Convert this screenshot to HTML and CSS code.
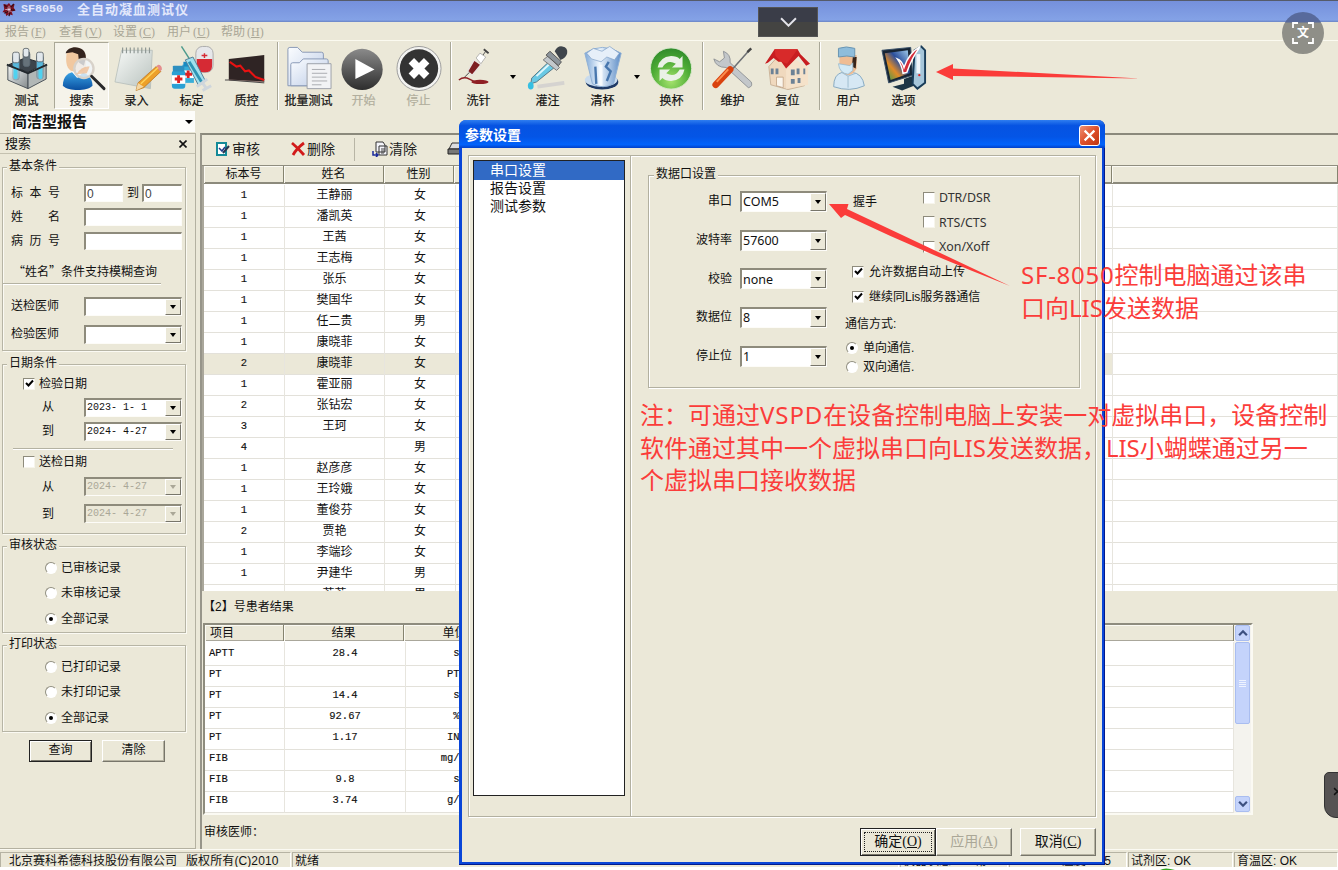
FILE: index.html
```html
<!DOCTYPE html>
<html lang="zh-CN">
<head>
<meta charset="utf-8">
<title>SF8050 全自动凝血测试仪</title>
<link rel="stylesheet" href="styles.css">
</head>
<body>
<svg width="0" height="0" class="defs">
  <defs>
    <linearGradient id="steel" x1="0" y1="0" x2="1" y2="1"><stop offset="0" stop-color="#f2f5f8"/><stop offset=".5" stop-color="#a9b2ba"/><stop offset="1" stop-color="#5a636b"/></linearGradient>
    <linearGradient id="blue" x1="0" y1="0" x2="0" y2="1"><stop offset="0" stop-color="#3aa6e8"/><stop offset="1" stop-color="#0a4fa0"/></linearGradient>
    <linearGradient id="ice" x1="0" y1="0" x2="1" y2="0"><stop offset="0" stop-color="#7ea8d8"/><stop offset=".4" stop-color="#eef6fd"/><stop offset="1" stop-color="#5c8cc6"/></linearGradient>
    <linearGradient id="dark" x1="0" y1="0" x2="0" y2="1"><stop offset="0" stop-color="#8a8a8a"/><stop offset="1" stop-color="#2d2d2d"/></linearGradient>
    <linearGradient id="paper" x1="0" y1="0" x2="1" y2="1"><stop offset="0" stop-color="#f7f9f7"/><stop offset="1" stop-color="#b8c2be"/></linearGradient>
    <linearGradient id="folder" x1="0" y1="0" x2="1" y2="1"><stop offset="0" stop-color="#fbfdff"/><stop offset="1" stop-color="#bccbe6"/></linearGradient>
    <linearGradient id="screen" x1="0" y1="1" x2="1" y2="0"><stop offset="0" stop-color="#2a9a50"/><stop offset=".35" stop-color="#e08a28"/><stop offset=".6" stop-color="#2b4f9c"/><stop offset="1" stop-color="#a8d4ef"/></linearGradient>
    <radialGradient id="green" cx=".5" cy=".8" r=".8"><stop offset="0" stop-color="#a5e36c"/><stop offset=".6" stop-color="#4cab35"/><stop offset="1" stop-color="#2f8a2b"/></radialGradient>
  </defs>
</svg>
<div class="app">
  <header class="titlebar">
    <svg class="logo" viewBox="0 0 16 16"><path d="M2 2l4 1 2-2 2 3 4-2-1 4 2 3-4 1 1 4-4-1-3 2-1-4-3 0 2-3z" fill="#7c1020"/><path d="M4 8l8 0M8 4v8M5 5l6 6M11 5l-6 6" stroke="#e6dcf4" stroke-width=".7"/><path d="M3 3l3 3M13 2l-3 4M14 9l-4-1M3 12l4-2M8 15l1-4" stroke="#3c0810" stroke-width="1.400"/></svg>
    <span class="lat">SF8050</span><span>全自动凝血测试仪</span>
  </header>
  <nav class="menubar"><span>报告<em>(<u>F</u>)</em></span><span>查看<em>(<u>V</u>)</em></span><span>设置<em>(<u>C</u>)</em></span><span>用户<em>(<u>U</u>)</em></span><span>帮助<em>(<u>H</u>)</em></span></nav>
  <div class="toolbar">
    <div class="tool"><svg viewBox="0 0 48 48"><path d="M5 20L22 13l20 6-17 9z" fill="#3c444b" stroke="#20262b"/><g stroke="#5c6a74" stroke-width=".8"><rect x="9" y="10" width="7" height="26" rx="3" fill="#58b8dc"/><rect x="20" y="6" width="7" height="16" rx="3" fill="#66727a"/><rect x="34" y="10" width="7" height="25" rx="3" fill="#58b8dc"/></g><g fill="#e2e8ec" stroke="#4d565d" stroke-width=".8"><rect x="9" y="7" width="7" height="11" rx="2"/><rect x="20" y="3" width="6" height="9" rx="2"/><rect x="34" y="7" width="7" height="10" rx="2"/></g><path d="M4 21v15l21 9V29z" fill="url(#steel)" fill-opacity=".72" stroke="#4a5258"/><path d="M25 29v16l19-10V20z" fill="#9aa3a9" fill-opacity=".72" stroke="#4a5258"/><path d="M12 24v9M38 24v9" stroke="#4fd2f0" stroke-width="4" stroke-linecap="round"/><path d="M3 20l22 9 20-9" fill="none" stroke="#22282d" stroke-width="2"/></svg><span>测试</span></div>
    <div class="tool selected"><svg viewBox="0 0 48 48"><path d="M8 8c3-8 19-8 20 4v12l-7 6-9-4C7 22 7 15 8 8z" fill="#f1c8a0"/><path d="M7 8C9-1 29-1 28 13l-2 8-5-3-1-9-6-2z" fill="#33231d"/><path d="M4 42c0-10 6-15 15-15s16 6 16 15c-6 6-25 6-31 0z" fill="url(#blue)"/><path d="M13 27l6 7 7-7" fill="#fff"/><circle cx="26" cy="24" r="10" fill="#f0f4f8" fill-opacity=".8" stroke="#d8d2ca" stroke-width="2.500"/><path d="M18 30q6-9 14-8l-3 7z" fill="#efb483" opacity=".65"/><path d="M34 32l13 13" stroke="#29292b" stroke-width="3" stroke-linecap="round"/></svg><span>搜索</span></div>
    <div class="tool"><svg viewBox="0 0 48 48"><path d="M8 5h32l-2 40L1 38z" fill="url(#paper)" stroke="#b4bcb8" stroke-width=".8"/><path d="M9 2v6m4-6v6m4-6v6m4-6v6m4-6v6m4-6v6m4-6v6m4-6v6" stroke="#8d9693" stroke-width="1.200"/><path d="M23 47l2-8 19-17 5 5-18 17z" fill="#eda02a" stroke="#b46c18" stroke-width=".7"/><path d="M44 22l2-2q4 0 4 5l-2 2z" fill="#e58d8d"/><path d="M23 47l2-8 6 4z" fill="#f3d7a5"/><path d="M28 40l18-17" stroke="#ffd45c" stroke-width="1.500"/></svg><span>录入</span></div>
    <div class="tool"><svg viewBox="0 0 48 48"><rect x="28" y="1" width="18" height="27" rx="7" fill="#e6e7ea" stroke="#aaa"/><path d="M29 14h16v7q0 7-8 7t-8-7z" fill="#d62a34"/><path d="M37 8v5m-3-2.500h6" stroke="#d62a34" stroke-width="1.500"/><path d="M14 20h12v19H14z" fill="#38aed8"/><rect x="15" y="17" width="10" height="5" fill="#188bc3"/><path d="M14 26h12v8H14z" fill="#fff"/><path d="M20 26v8m-4-4h8" stroke="#e02222" stroke-width="3"/><rect x="3" y="26" width="14" height="19" rx="3" fill="#2aa0d4"/><rect x="4" y="21" width="12" height="6" rx="1" fill="#2d8fc0"/><path d="M3 31h14v9H3z" fill="#fff"/><path d="M10 31v8m-4-4h8" stroke="#e02222" stroke-width="3"/><path d="M13 1l9 14" stroke="#4c9a8c" stroke-width="1.500"/><path d="M17 15l8-3 13 25-7 5z" fill="#9fe0ee" stroke="#547c94"/><path d="M21 17l13 21" stroke="#2c94b4" stroke-width="3"/><path d="M29 43l11-8m-5 4l4 6m-4 2l9-5" stroke="#cfd6dc" stroke-width="3"/></svg><span>标定</span></div>
    <div class="tool"><svg viewBox="0 0 48 48"><path d="M5 14l37-4v28L5 36z" fill="#2f2424"/><path d="M5 36l37 2" stroke="#9e7f7a"/><path d="M1 36h4l37 3" stroke="#444" fill="none"/><path d="M6 17l7 5 4-1 5 6 4-1 7 7 9 3" fill="none" stroke="#e81212" stroke-width="2.200"/></svg><span>质控</span></div>
    <i class="sep s1"></i>
    <div class="tool"><svg viewBox="0 0 48 48"><g stroke="#8797b5" fill="url(#folder)" stroke-linejoin="round"><path d="M2 42V4q0-2 2-2h8l5 5h20q2 0 2 2v33z"/><path d="M5 42V20q0-2 2-2h7l4-4h24q2 0 2 2v26z"/><path d="M22 19h25v26H22z" fill="#f2f3f5" stroke="#9b9fa7"/></g><path d="M27 25h14M27 29h16M27 33h15M27 37h16M27 41h10" stroke="#a8abb0"/></svg><span>批量测试</span></div>
    <div class="tool off"><svg viewBox="0 0 48 48"><circle cx="22" cy="25" r="21.500" fill="url(#dark)"/><path d="M15 14v21l20-10z" fill="#fff"/></svg><span>开始</span></div>
    <div class="tool off"><svg viewBox="0 0 48 48"><circle cx="24" cy="24" r="23" fill="#f3f3f1" stroke="#9a9a9a"/><circle cx="24" cy="24" r="20" fill="#333"/><path d="M16 16l16 16M32 16L16 32" stroke="#fff" stroke-width="8"/></svg><span>停止</span></div>
    <i class="sep s2"></i>
    <div class="tool wash"><svg viewBox="0 0 48 48"><path d="M31 6l-5 7" stroke="#555"/><path d="M29 4l5 4" stroke="#444" stroke-width="2"/><path d="M19 15l7 5-9 11-5-4z" fill="#7e1f22" stroke="#e8e4e0" stroke-width="1.500"/><path d="M21 13l4-5 6 4-5 7z" fill="#fff" stroke="#999" stroke-width=".7"/><path d="M14 28l-6 6" stroke="#444"/><path d="M3 36q5-4 11-1l6 3" fill="none" stroke="#8f1f24" stroke-width="1.500"/><ellipse cx="25" cy="38" rx="9" ry="2.200" fill="#8f1f24"/></svg><span>洗针</span></div>
    <b class="drop"></b>
    <div class="tool"><svg viewBox="0 0 48 48"><path d="M13 43l28-4" stroke="#d5d3d0" stroke-width="4"/><path d="M7 34L27 15l6 6-21 17-6 2z" fill="#69c9e4" stroke="#567786"/><path d="M12 32l15-14" stroke="#dff6fb" stroke-width="2"/><path d="M24 11l12 12-3 3-14-11z" fill="#c3c8cc" stroke="#777"/><path d="M26 6l12 11-3 4-13-11z" fill="#8c949b" stroke="#555"/><path d="M31 6q3-6 8-5 6 1 5 7-1 5-7 7z" fill="#3f454c"/><ellipse cx="6" cy="42" rx="3" ry="4" fill="#36bfe2"/></svg><span>灌注</span></div>
    <div class="tool"><svg viewBox="0 0 48 48"><ellipse cx="23" cy="38" rx="17" ry="8" fill="#1f3a66"/><ellipse cx="22" cy="36" rx="17" ry="7" fill="#c8dbee"/><path d="M5 8q18-12 38 0l-8 32q-11 6-22 0z" fill="url(#ice)" stroke="#8fb0d4"/><path d="M7 8l7-5 9 3 8-5 10 7-5 7-8-3-6 5-10-3z" fill="#e6eff9" stroke="#7c9dc4" stroke-width=".7"/><path d="M16 22l1 18M30 17l-3 5 5 5-4 10" stroke="#4877ae" fill="none" stroke-width="2.500"/><path d="M22 20v22" stroke="#fff" stroke-width="3" opacity=".7"/></svg><span>清杯</span></div>
    <b class="drop"></b>
    <div class="tool"><svg viewBox="0 0 48 48"><circle cx="23" cy="24" r="21.500" fill="url(#green)" stroke="#d8e7cc"/><path d="M9 23q2-11 14-12 6 0 9 3l3-3v12H24l4-4q-9-5-14 4zM37 25q-2 11-14 12-6 0-9-3l-3 3V25h11l-4 4q9 5 14-4z" fill="#eaf1e6"/></svg><span>换杯</span></div>
    <i class="sep s3"></i>
    <div class="tool"><svg viewBox="0 0 48 48"><path d="M4 14l6 3 5-4-1-7q8 3 7 12l22 20q2 5-3 6L17 23q-11 0-13-9z" fill="#c3c7ca" stroke="#81868a" stroke-width=".8"/><path d="M41 5L24 24" stroke="#6c6f73" stroke-width="1.600"/><path d="M39 7l4-4" stroke="#444" stroke-width="2.500"/><path d="M6 41L21 25" stroke="#d9420f" stroke-width="7" stroke-linecap="round"/><path d="M7 38l12-13" stroke="#fb8f4f" stroke-width="2"/></svg><span>维护</span></div>
    <div class="tool"><svg viewBox="0 0 48 48"><path d="M4 22l9-10 28 10v20l-17 4-18-5z" fill="#f0d9be" stroke="#c2a88c" stroke-width=".8"/><path d="M22 45V25l9-11 14 9v18z" fill="#f5e2ca"/><path d="M0 19L10 4h24l3 5 10 10-4 2-8-10-13 13-5-7-3 0-5-4-6 5z" fill="#c81d20"/><path d="M10 4h24l-11 15-6-2-6-6z" fill="#d82a2a"/><g fill="#6c8296"><path d="M6 24h3v6H6zM11 24h3v6h-3zM27 25h4v6h-4zM33 24h3v6h-3zM40 24h2v6h-2zM27 35h4v5h-4zM34 34h3v5h-3z"/></g><path d="M12 33h7v11l-7-2z" fill="#faf5ec" stroke="#bd9e80" stroke-width=".8"/></svg><span>复位</span></div>
    <i class="sep s4"></i>
    <div class="tool"><svg viewBox="0 0 48 48"><path d="M8 43q0-13 9-15h10q11 1 13 14-15 7-32 1z" fill="#d6e8f4" stroke="#86a8bf"/><path d="M14 10h18v14q-4 7-9 7t-9-8z" fill="#efbd94"/><path d="M28 12h4l-1 12-4-2z" fill="#37241a"/><path d="M13 3q8-3 17 0v9q-8-2-17 0z" fill="#8fbddb" stroke="#6793b1"/><path d="M13 19l12 2 3-3v8l-5 4q-9-1-10-11z" fill="#d2eaf7" stroke="#97b9cd" stroke-width=".8"/><path d="M23 44V32l-7-4m7 4l8-3" fill="none" stroke="#9dbccf"/></svg><span>用户</span></div>
    <div class="tool"><svg viewBox="0 0 48 48"><path d="M24 35l11-4 2 10-15 6-10-4 12-3z" fill="#1d3545"/><path d="M1 5l30-3 2 29-25 8z" fill="#172534" stroke="#3a5068"/><path d="M4 8l24-3 2 24-20 7z" fill="url(#screen)"/><path d="M35 5l7-4 4 4v34l-8 6-5-5z" fill="#a6c6da" stroke="#193c58" stroke-width="2"/><path d="M39 9v20" stroke="#f1f6fa" stroke-width="4"/><circle cx="40" cy="31" r="1.200" fill="#e02020"/><path d="M17 14q5 2 7 9Q29 8 41 1q-9 12-14 27l-4 1q-1-8-6-15z" fill="#d42d3b" stroke="#fff" stroke-width="1.500"/></svg><span>选项</span></div>
  </div>
  <div class="report-row"><div class="report-select">简洁型报告<b class="tri"></b></div></div>
  <main class="main">
    <aside class="side">
      <div class="side-head"><span>搜索</span><svg viewBox="0 0 8 8"><path d="M.5.5l7 7M7.500.5l-7 7" stroke="#111" stroke-width="1.600"/></svg></div>
      <section class="group basic"><h3>基本条件</h3>
        <div class="row r24"><label class="spread"><i>标</i><i>本</i><i>号</i></label><div class="inp w38">0</div><em>到</em><div class="inp w38">0</div></div>
        <div class="row r24"><label class="spread"><i>姓</i><i>名</i></label><div class="inp"></div></div>
        <div class="row r24"><label class="spread"><i>病</i><i>历</i><i>号</i></label><div class="inp"></div></div>
        <div class="row hint">“姓名”条件支持模糊查询</div>
        <hr class="line1">
        <div class="row r28"><label>送检医师</label><div class="inp combo"><b></b></div></div>
        <div class="row r28"><label>检验医师</label><div class="inp combo"><b></b></div></div>
      </section>
      <section class="group dates"><h3>日期条件</h3>
        <div class="row chk"><span class="box"><svg viewBox="0 0 9 9"><path d="M1 4l2.500 2.500L8 1.500" fill="none" stroke="#000" stroke-width="2"/></svg></span>检验日期</div>
        <div class="row r24 d"><label>从</label><div class="inp combo mono">2023- 1- 1<b></b></div></div>
        <div class="row r24 d"><label>到</label><div class="inp combo mono">2024- 4-27<b></b></div></div>
        <hr class="line2">
        <div class="row chk"><span class="box"></span>送检日期</div>
        <div class="row r27 d"><label>从</label><div class="inp combo mono dis">2024- 4-27<b></b></div></div>
        <div class="row r27 d"><label>到</label><div class="inp combo mono dis">2024- 4-27<b></b></div></div>
      </section>
      <section class="group radios"><h3>审核状态</h3>
        <div class="row"><span class="radio"></span>已审核记录</div>
        <div class="row"><span class="radio"></span>未审核记录</div>
        <div class="row"><span class="radio on"></span>全部记录</div>
      </section>
      <section class="group radios"><h3>打印状态</h3>
        <div class="row"><span class="radio"></span>已打印记录</div>
        <div class="row"><span class="radio"></span>未打印记录</div>
        <div class="row"><span class="radio on"></span>全部记录</div>
      </section>
      <div class="side-btns"><div class="btn def">查询</div><div class="btn">清除</div></div>
    </aside>
    <section class="content">
      <div class="sub-tools">
        <span><svg viewBox="0 0 16 16"><path d="M2 2h9v12H2z" fill="#fff" stroke="#148a98" stroke-width="2"/><path d="M4 7l3 3 3-4" fill="none" stroke="#223a8a" stroke-width="1.500"/><path d="M8 12l6-7" stroke="#2a3550" stroke-width="2"/></svg>审核</span>
        <span><svg viewBox="0 0 16 16"><path d="M2 2q6 5 12 12M14 2Q7 7 3 14" fill="none" stroke="#d21a1a" stroke-width="2.800"/></svg>删除</span>
        <i></i>
        <span><svg viewBox="0 0 16 16"><path d="M4 1h7l2 3v7H4zM7 5h8v9H7z" fill="#f4f4fa" stroke="#333"/><path d="M9 8h4M9 10h4M9 12h3" stroke="#444"/><path d="M1 10v4h5m-2-2l2 2-2 2" fill="none" stroke="#1a2a9a" stroke-width="1.500"/></svg>清除</span>
        <span class="printer"><svg viewBox="0 0 16 16"><path d="M5 2h9l-2 6H2z" fill="#ddd" stroke="#333"/><path d="M1 8h14v5H1z" fill="#777" stroke="#222"/></svg></span>
      </div>
      <div class="grid1">
        <div class="thead"><span>标本号</span><span>姓名</span><span>性别</span><span></span><span></span></div>
        <div class="tr"><span>1</span><span>王静丽</span><span>女</span><span></span><span></span></div>
        <div class="tr"><span>1</span><span>潘凯英</span><span>女</span><span></span><span></span></div>
        <div class="tr"><span>1</span><span>王茜</span><span>女</span><span></span><span></span></div>
        <div class="tr"><span>1</span><span>王志梅</span><span>女</span><span></span><span></span></div>
        <div class="tr"><span>1</span><span>张乐</span><span>女</span><span></span><span></span></div>
        <div class="tr"><span>1</span><span>樊国华</span><span>女</span><span></span><span></span></div>
        <div class="tr"><span>1</span><span>任二贵</span><span>男</span><span></span><span></span></div>
        <div class="tr"><span>1</span><span>康晓菲</span><span>女</span><span></span><span></span></div>
        <div class="tr cur"><span>2</span><span>康晓菲</span><span>女</span><span></span><span></span></div>
        <div class="tr"><span>1</span><span>霍亚丽</span><span>女</span><span></span><span></span></div>
        <div class="tr"><span>2</span><span>张钻宏</span><span>女</span><span></span><span></span></div>
        <div class="tr"><span>3</span><span>王珂</span><span>女</span><span></span><span></span></div>
        <div class="tr"><span>4</span><span></span><span>男</span><span></span><span></span></div>
        <div class="tr"><span>1</span><span>赵彦彦</span><span>女</span><span></span><span></span></div>
        <div class="tr"><span>1</span><span>王玲娥</span><span>女</span><span></span><span></span></div>
        <div class="tr"><span>1</span><span>董俊芬</span><span>女</span><span></span><span></span></div>
        <div class="tr"><span>2</span><span>贾艳</span><span>女</span><span></span><span></span></div>
        <div class="tr"><span>1</span><span>李端珍</span><span>女</span><span></span><span></span></div>
        <div class="tr"><span>1</span><span>尹建华</span><span>男</span><span></span><span></span></div>
        <div class="tr"><span></span><span>若若</span><span>男</span><span></span><span></span></div>
      </div>
      <div class="caption">【2】号患者结果</div>
      <div class="grid2">
        <div class="grid2-body">
          <div class="thead"><span>项目</span><span>结果</span><span>单位</span><span></span></div>
          <div class="tr"><span>APTT</span><span>28.4</span><span>s</span><span></span></div>
          <div class="tr"><span>PT</span><span></span><span>PTR</span><span></span></div>
          <div class="tr"><span>PT</span><span>14.4</span><span>s</span><span></span></div>
          <div class="tr"><span>PT</span><span>92.67</span><span>%</span><span></span></div>
          <div class="tr"><span>PT</span><span>1.17</span><span>INR</span><span></span></div>
          <div class="tr"><span>FIB</span><span></span><span>mg/dl</span><span></span></div>
          <div class="tr"><span>FIB</span><span>9.8</span><span>s</span><span></span></div>
          <div class="tr"><span>FIB</span><span>3.74</span><span>g/l</span><span></span></div>
        </div>
        <div class="scroll">
          <div class="sb"><svg viewBox="0 0 9 9"><path d="M1 6.500l3.500-3.500L8 6.500" fill="none" stroke="#3c5080" stroke-width="2"/></svg></div>
          <div class="thumb"><i></i><i></i><i></i><i></i></div>
          <div class="sb end"><svg viewBox="0 0 9 9"><path d="M1 2.500L4.500 6 8 2.500" fill="none" stroke="#3c5080" stroke-width="2"/></svg></div>
        </div>
      </div>
      <div class="doctor">审核医师：</div>
    </section>
  </main>
  <footer class="status"><span>北京赛科希德科技股份有限公司<em>版权所有(C)2010</em></span><span>就绪</span><span>仪器状态：正常</span><span class="tail">温度：25</span><span>试剂区: OK</span><span>育温区: OK</span></footer>

  <div class="dialog">
    <div class="dlg-title"><span>参数设置</span><div class="close"><svg viewBox="0 0 12 12"><path d="M1.500 1.500l9 9M10.500 1.500l-9 9" stroke="#fff" stroke-width="2"/></svg></div></div>
    <div class="dlg-body">
      <div class="frame">
        <ul class="list"><li class="sel">串口设置</li><li>报告设置</li><li>测试参数</li></ul>
        <div class="pane">
          <section class="port"><h3>数据口设置</h3>
            <div class="port-left">
              <div class="prow"><label>串口</label><div class="inp combo">COM5<b></b></div></div>
              <div class="prow"><label>波特率</label><div class="inp combo">57600<b></b></div></div>
              <div class="prow"><label>校验</label><div class="inp combo">none<b></b></div></div>
              <div class="prow"><label>数据位</label><div class="inp combo">8<b></b></div></div>
              <div class="prow"><label>停止位</label><div class="inp combo">1<b></b></div></div>
            </div>
            <div class="port-right">
              <div class="shake"><span>握手</span><div>
                <p><span class="box"></span>DTR/DSR</p><p><span class="box"></span>RTS/CTS</p><p><span class="box"></span>Xon/Xoff</p></div></div>
              <p class="opt"><span class="box"><svg viewBox="0 0 9 9"><path d="M1 4l2.500 2.500L8 1.500" fill="none" stroke="#000" stroke-width="2"/></svg></span>允许数据自动上传</p>
              <p class="opt"><span class="box"><svg viewBox="0 0 9 9"><path d="M1 4l2.500 2.500L8 1.500" fill="none" stroke="#000" stroke-width="2"/></svg></span>继续同Lis服务器通信</p>
              <p class="mode">通信方式:</p>
              <p class="rad"><span class="radio on"></span>单向通信.</p>
              <p class="rad"><span class="radio"></span>双向通信.</p>
            </div>
          </section>
        </div>
      </div>
      <div class="dlg-btns"><div class="btn def focus"><span>确定(<u>O</u>)</span></div><div class="btn dis">应用(<u>A</u>)</div><div class="btn cancel">取消(<u>C</u>)</div></div>
    </div>
  </div>

  <svg class="arrows" viewBox="0 0 1338 870"><path d="M936 72l17-8v4.500l187 10-187-2.500v4z" fill="#fb3c3a"/><path d="M829 204l19.500 0-1.500 5q85 40 163 77-85-33-165-71l-4 3z" fill="#fb3c3a"/><path d="M1160 870q5-3 15 0z" fill="#35a820"/></svg>
  <p class="note n1"><span>SF-8050</span>控制电脑通过该串<br>口向LIS发送数据</p>
  <p class="note n2">注：可通过<span>VSPD</span>在设备控制电脑上安装一对虚拟串口，设备控制<br>软件通过其中一个虚拟串口向LIS发送数据，LIS小蝴蝶通过另一<br>个虚拟串口接收数据</p>
  <div class="pull"><svg viewBox="0 0 16 9"><path d="M1 1l7 7 7-7" fill="none" stroke="#e4e4ea" stroke-width="1.800"/></svg></div>
  <div class="translate"><svg viewBox="0 0 22 22"><path d="M1 6V1h5M16 1h5v5M21 16v5h-5M6 21H1v-5" fill="none" stroke="#fff" stroke-width="1.800"/></svg><span>文</span></div>
  <div class="edge-tab"><svg viewBox="0 0 8 8"><path d="M1 1l3 3-3 3M7 1L4 4l3 3" fill="none" stroke="#111" stroke-width="1.300"/></svg></div>
</div>
</body>
</html>
```
FILE: styles.css
```css
* { box-sizing: border-box; }
body { margin: 0; background: #ebe8d8; }
p, h3, ul { margin: 0; padding: 0; font-weight: normal; list-style: none; }
i, em { font-style: normal; }
.defs { position: absolute; }
.app { position: relative; width: 1338px; height: 870px; overflow: hidden; display: flex; flex-direction: column; background: #ebe8d8; color: #111; font: 12px/16px "Liberation Sans", "Noto Sans CJK SC", sans-serif; white-space: nowrap; }

.titlebar { height: 22px; flex: none; border-top: 1px solid #555b6a; background: linear-gradient(#7590dc, #7e9be2 55%, #84a2e6 90%, #6a84c4); display: flex; align-items: center; padding: 0 0 5px 1px; color: #e3e8fb; font: 600 13px/16px "Noto Sans CJK SC", sans-serif; letter-spacing: 1px; }
.titlebar .logo { width: 16px; height: 15px; margin-right: 4px; }
.titlebar .lat { width: 56px; font: bold 11.700px/16px "Liberation Mono", monospace; letter-spacing: 0; }
.menubar { height: 19px; flex: none; display: flex; gap: 12px; padding: 2px 0 0 5px; color: #a9a696; border-bottom: 1px solid #fbfaf0; font-family: "Liberation Serif", "Noto Sans CJK SC", serif; }
.menubar span { width: 42px; }
.menubar em { margin-left: 2px; }

.toolbar { height: 70px; flex: none; display: flex; margin-left: -1px; padding-top: 1px; }
.tool { width: 55px; height: 67px; flex: none; display: flex; flex-direction: column; align-items: center; padding-top: 3px; }
.tool svg { width: 46px; height: 47px; flex: none; overflow: visible; }
.tool span { line-height: 19px; -webkit-text-stroke: .2px; }
.tool.selected { background: #f5f3ea; border: 1px solid #aaa897; border-right-color: #fff; border-bottom-color: #fff; padding-top: 2px; }
.tool.off span { color: #b1ae9d; }
.sep { width: 2px; height: 68px; margin: 0 2px 0 3px; background: #a9a797; border-right: 1px solid #fff; flex: none; }
.s2 { margin: 0 -1px 0 4px; }
.s3 { margin-right: 1px; }
.s4 { margin: 0 0 0 4px; }
.drop { width: 14px; flex: none; display: flex; align-items: center; justify-content: center; }
.drop::before, .tri, .combo b::before { content: ""; border: 3px solid transparent; border-top: 4px solid #000; border-bottom: 0; }
.report-row { height: 22px; flex: none; padding-left: 11px; }
.report-select { width: 184px; height: 21px; background: #fdfdfa; display: flex; align-items: center; justify-content: space-between; padding: 1px 2px 0 1px; font-size: 15px; font-weight: bold; }
.tri { border-width: 4px 4px 0; }

.main { height: 716px; flex: none; display: flex; }
.side { width: 196px; margin-right: 4px; border-right: 1px solid #b4b1a1; border-bottom: 1px solid #b4b1a1; border-top: 1px solid #b4b1a1; display: flex; flex-direction: column; }
.side-head { height: 20px; display: flex; align-items: center; justify-content: space-between; padding: 0 8px 0 5px; border-bottom: 1px solid #c4c1b0; font-size: 13px; }
.side-head svg { width: 8px; height: 8px; }
.group { width: 184px; margin-left: 2px; border: 1px solid #b7b5a5; box-shadow: inset 1px 1px #fbfaf3, 1px 1px #fbfaf3; flex: none; }
.group h3, .port h3 { width: max-content; height: 16px; margin: -9px 0 0 4px; padding: 0 2px; background: #ebe8d8; font-size: 12px; line-height: 15px; }
.row { display: flex; align-items: center; }
.basic { height: 184px; margin-top: 13px; }
.basic h3 { margin-bottom: 6px; }
.r24 { height: 24px; } .r27 { height: 27px; } .r28 { height: 28px; }
.row label { width: 49px; margin: 0 24px 0 8px; flex: none; }
.spread { display: flex; justify-content: space-between; }
.inp { width: 98px; height: 18px; flex: none; background: #fff; border: 2px solid #8e8b7c; border-right: 1px solid #fdfcf8; border-bottom: 1px solid #fdfcf8; display: flex; align-items: center; line-height: 14px; font-size: 12px; padding-left: 1px; }
.inp.w38 { width: 39px; color: #444; }
.row em { margin: 0 3px 0 4px; }
.row em + .inp { width: 40px; }
.combo { height: 19px; padding: 0; padding-left: 1px; }
.combo b { width: 16px; height: 100%; margin-left: auto; background: #ebe8d8; border: 1px solid #fff; border-right-color: #77756a; border-bottom-color: #77756a; display: flex; align-items: center; justify-content: center; }
.mono { font-family: "Liberation Mono", monospace; font-size: 10px; white-space: pre; }
.dis { color: #aaa797; background: #ebe8d8; }
.dis b::before { border-top-color: #aaa797; }
.hint { height: 30px; padding: 6px 0 0 10px; font-family: "Noto Sans CJK SC", sans-serif; }
hr { margin: 0; height: 2px; border: 0; border-top: 1px solid #b4b2a2; border-bottom: 1px solid #fff; }
.line1 { width: 158px; margin-bottom: 7px; }
.line2 { width: 160px; margin: 5px 0 0 10px; }
.dates { height: 170px; margin-top: 13px; }
.chk { height: 25px; padding-left: 20px; gap: 4px; }
.box { width: 12px; height: 12px; background: #fff; border: 1px solid #8e8b7c; border-right-color: #f7f5ec; border-bottom-color: #f7f5ec; display: inline-flex; align-items: center; justify-content: center; flex: none; }
.box svg { width: 9px; height: 9px; }
.dates .chk { height: 23px; }
.dates h3 + .chk { height: 23px; }
.row.d label { width: 12px; margin: 0 30px 0 39px; }
.radios { height: 87px; margin-top: 12px; }
.radios .row { height: 25.500px; padding-left: 42px; gap: 4px; }
.radios h3 + .row { margin-top: 1px; }
.radio { width: 12px; height: 12px; border-radius: 50%; border: 1px solid #918f80; border-right-color: #fff; border-bottom-color: #fff; background: #fff; display: inline-flex; align-items: center; justify-content: center; flex: none; }
.radio.on::after { content: ""; width: 4px; height: 4px; border-radius: 50%; background: #000; }
.side-btns { display: flex; gap: 10px; padding: 8px 0 0 29px; }
.btn { width: 63px; height: 22px; display: flex; align-items: center; justify-content: center; border: 1px solid #fff; border-right-color: #77756a; border-bottom-color: #77756a; box-shadow: inset -1px -1px #b5b2a1; }
.btn.def { border: 1px solid #222; box-shadow: inset 1px 1px #fff, inset -1px -1px #77756a; }
.side-btns .btn { padding-bottom: 2px; }

.content { flex: 1; border-left: 2px solid #97958a; border-top: 2px solid #8b897c; display: flex; flex-direction: column; overflow: hidden; }
.sub-tools { height: 31px; flex: none; display: flex; align-items: center; font-size: 14px; color: #222; padding: 0 0 2px 13px; border-bottom: 1px solid #8f8d7f; }
.sub-tools span { display: flex; align-items: center; gap: 1px; width: 75px; }
.sub-tools svg { width: 16px; height: 16px; }
.sub-tools i { width: 1px; height: 23px; background: #b8b5a5; margin-right: 17px; margin-left: -11px; }
.thead, .tr { display: grid; }
.grid1 { height: 425px; flex: none; overflow: hidden; border-left: 2px solid #aaa79b; background: #fff; }
.grid1 .thead { height: 18px; grid-template-columns: 80px 100px 70px 658px 1fr; border-bottom: 2px solid #8c8a7c; text-align: center; background: #ebe8d8; line-height: 17px; margin-bottom: 1px; }
.thead span { border-right: 1px solid #85836f; box-shadow: inset 1px 1px #fbfaf3; }
.grid1 .tr { height: 21px; grid-template-columns: 81px 100px 71px 657px 1fr; text-align: center; line-height: 21px; }
.tr span { border-right: 1px solid #e7e5de; border-bottom: 1px solid #e3e1da; }
.grid1 .tr span:first-child, .grid2 .tr { font-family: "Liberation Mono", monospace; font-size: 10.500px; -webkit-text-stroke: .15px; }
.grid1 .tr.cur { background: linear-gradient(90deg, #ebe8d8 908px, #fff 908px); }
.caption { height: 32px; flex: none; line-height: 32px; padding-left: 1px; }
.grid2 { width: 1050px; height: 192px; flex: none; margin-left: 1px; display: flex; border: 2px solid #8e8c7e; border-right-color: #fbfaf3; border-bottom-color: #fbfaf3; }
.grid2-body { flex: 1; background: #fff; overflow: hidden; }
.grid2 .thead { height: 16px; grid-template-columns: 79px 120px 102px 1fr; background: #ebe8d8; text-align: center; line-height: 16px; border-bottom: 1px solid #aaa79b; margin-bottom: 1px; }
.grid2 .tr { height: 21px; grid-template-columns: 80px 121px 102px 1fr; text-align: center; line-height: 23px; }
.grid2 .thead span:first-child { text-align: left; padding-left: 5px; }
.grid2 .tr span:first-child { text-align: left; padding-left: 4px; }
.scroll { width: 17px; background: #f4f3ee; display: flex; flex-direction: column; align-items: center; }
.sb, .thumb { width: 15px; background: #c4d3fb; border: 1px solid #a9bdf0; border-radius: 2px; display: flex; align-items: center; justify-content: center; }
.sb { height: 16px; } .sb svg { width: 10px; height: 10px; }
.sb.end { margin-top: auto; margin-bottom: 1px; }
.thumb { height: 82px; margin-top: 1px; flex-direction: column; gap: 1px; }
.thumb i { width: 7px; height: 1px; background: #eef3ff; }
.doctor { line-height: 34px; padding-left: 2px; }

.status { height: 21px; flex: none; display: grid; grid-template-columns: 291px 607px 108px 118px 105px 1fr; gap: 1px; padding-top: 3px; border-bottom: 3px solid #fff; box-shadow: inset 0 1px #fbfaf3; }
.status span { border: 1px solid #b6b3a3; border-bottom: 0; border-right-color: #fff; line-height: 16px; padding-left: 2px; overflow: hidden; }
.status span:first-child { padding-left: 8px; }
.status em { margin-left: 9px; letter-spacing: .1px; }
.status .tail { text-align: right; padding-right: 15px; }

.dialog { position: absolute; left: 459px; top: 120px; width: 646px; height: 745px; display: flex; flex-direction: column; background: #0a46d8; border-radius: 7px 7px 0 0; box-shadow: inset -1px -1px #031a8c; padding: 0 3px 3px; }
.dlg-title { height: 28px; margin: 0 -3px; flex: none; border-radius: 7px 7px 0 0; background: linear-gradient(#2f7df0, #0653e2 20%, #0455e6 60%, #0263fb 88%, #0240c8); color: #fff; font-size: 14px; font-weight: bold; display: flex; align-items: center; justify-content: space-between; padding: 2px 5px 0 6px; }
.close { width: 21px; height: 21px; border: 1px solid #fff; border-radius: 3px; background: linear-gradient(135deg, #ef9174, #dd4f2b 50%, #bf3610); display: flex; align-items: center; justify-content: center; }
.close svg { width: 13px; height: 13px; }
.dlg-body { flex: 1; background: #ebe8d8; padding: 7px 6px 0; }
.frame { height: 662px; border: 1px solid #b2b0a0; box-shadow: inset 1px 1px #fff, 1px 1px #fff; display: flex; padding-left: 4px; }
.list { width: 152px; height: 636px; margin-top: 4px; background: #fff; border: 1px solid #222; font-size: 14px; line-height: 17px; flex: none; }
.list li { padding-left: 16px; height: 18px; }
.list .sel { background: #316ac5; color: #fff; height: 19px; line-height: 18px; }
.pane { flex: 1; margin-left: 5px; border-left: 1px solid #b2b0a0; box-shadow: inset 1px 0 #fff; padding: 19px 0 0 17px; }
.port { width: 432px; height: 213px; border: 1px solid #b2b0a0; box-shadow: inset 1px 1px #fff, 1px 1px #fff; display: grid; grid-template-columns: 185px 1fr; align-content: start; }
.port h3 { grid-column: 1 / 3; margin-left: 5px; height: 15px; }
.port-left { padding: 0 0 0 8px; }
.prow { height: 38.700px; display: flex; align-items: center; gap: 8px; }
.prow label { width: 75px; text-align: right; }
.prow .inp { width: 87px; height: 21px; font: 12.500px "Noto Sans", sans-serif; }
.port-right { padding: 4px 0 0 9px; }
.shake { display: flex; height: 73px; }
.shake > span { width: 80px; padding-left: 10px; line-height: 32px; }
.shake p { height: 24.500px; display: flex; align-items: center; gap: 4px; padding-bottom: 1px; color: #333; font: 12.400px "Noto Sans", sans-serif; }
.opt { height: 25px; display: flex; align-items: center; gap: 5px; padding-left: 9px; }
.mode { height: 29px; line-height: 31px; padding-left: 2px; }
.rad { height: 19px; display: flex; align-items: center; gap: 5px; padding-left: 3px; }
.dlg-btns { display: flex; justify-content: flex-end; padding-top: 11px; font-family: "Liberation Serif", "Noto Sans CJK SC", serif; font-size: 14px; }
.dlg-btns .btn { width: 76px; height: 28px; }
.dlg-btns .focus span { width: 68px; height: 20px; border: 1px dotted #222; display: flex; align-items: center; justify-content: center; line-height: 18px; }
.dlg-btns .cancel { margin-left: 8px; }

.arrows { position: absolute; left: 0; top: 0; width: 1338px; height: 870px; }
.note { position: absolute; color: #fb3c3a; font: 24px/32.500px "Noto Sans", "Noto Sans CJK SC", sans-serif; }
.n1 { left: 1021px; top: 259px; }
.n2 { left: 640px; top: 399px; }
.n1 span { letter-spacing: .75px; }
.n2 span { letter-spacing: .9px; }
.pull { position: absolute; left: 758px; top: 7px; width: 60px; height: 30px; background: linear-gradient(#3a3d48 50%, #444442 50%); border: 1px solid #555; display: flex; align-items: center; justify-content: center; }
.pull svg { width: 17px; height: 10px; }
.translate { position: absolute; left: 1282px; top: 12px; width: 42px; height: 42px; border-radius: 50%; background: linear-gradient(#586a9c 24%, #8f8f88 26%); display: grid; place-items: center; color: #fff; font-weight: bold; }
.translate > * { grid-area: 1 / 1; }
.translate svg { width: 22px; height: 22px; }
.edge-tab { position: absolute; left: 1324px; top: 772px; width: 18px; height: 46px; background: #565353; border: 1px solid #333; border-radius: 5px 0 0 12px; padding: 11px 0 0 8px; }
.edge-tab svg { width: 9px; height: 9px; }
```
